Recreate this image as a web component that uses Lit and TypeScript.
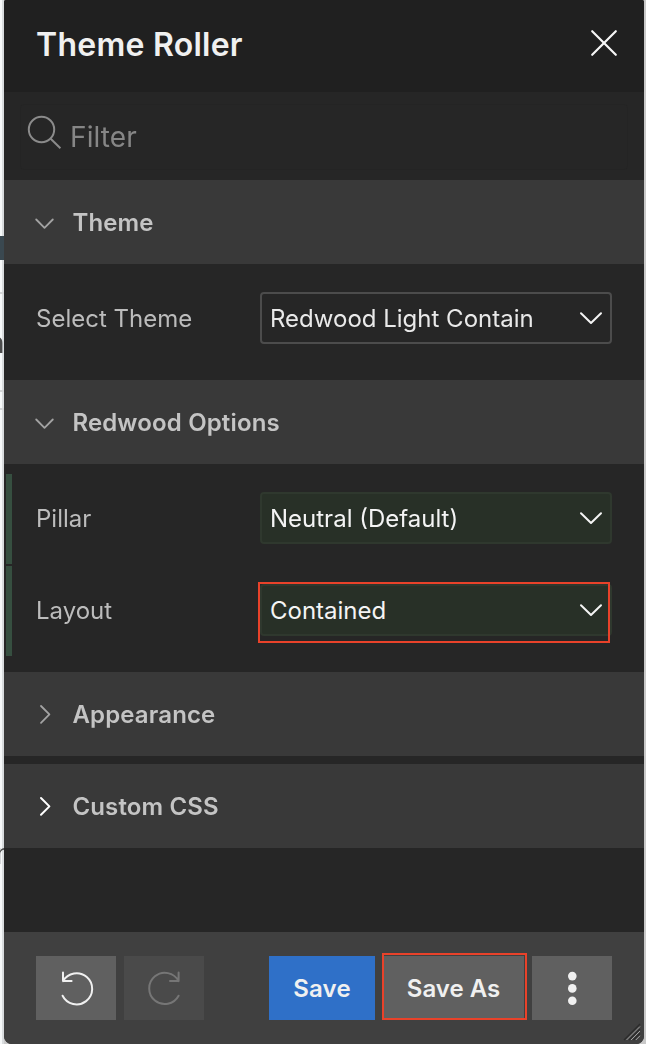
import { LitElement, html, css, svg } from "lit";
import { customElement, property } from "lit/decorators.js";
import { classMap } from "lit/directives/class-map.js";

@customElement("tr-group-header")
class GroupHeader extends LitElement {
  @property() label = "";
  @property({ type: Boolean }) open = false;
  @property({ type: Boolean }) bright = false;
  static styles = css`
    :host { display: flex; align-items: center; height: 84px; background: #393939; }
    svg { width: 24px; height: 24px; margin: 0 16px 0 28px; fill: none; stroke: #a3a3a3; stroke-width: 1.8; stroke-linecap: round; stroke-linejoin: round; }
    svg.bright { stroke: #fff; stroke-width: 2; }
    span { font-size: 24px; font-weight: 600; line-height: 32px; color: #c4c4c4; letter-spacing: 0.15px; padding: 2px 0 0 0.4px; }
  `;
  render() {
    return html`<svg class=${classMap({ bright: this.bright })} viewBox="0 0 24 24">
        ${this.open ? svg`<path d="M4.2 9.5 12.5 17.8 20.8 9.5" />` : svg`<path d="M9 4 17.4 12.4 9 20.8" />`}
      </svg><span>${this.label}</span>`;
  }
}

@customElement("tr-select")
class Select extends LitElement {
  @property() value = "";
  @property({ type: Boolean, reflect: true }) changed = false;
  static styles = css`
    :host { display: flex; align-items: center; justify-content: space-between; box-sizing: border-box; width: 352px; height: 52px; border: 2px solid #4c4c4c; border-radius: 4px; background: #262626; color: #e9e9e9; padding: 0 7px 0 8px; }
    :host([changed]) { background: #283027; border-color: #2f382e; color: #f4f4f4; }
    span { font-size: 24px; line-height: 32px; padding-top: 2px; }
    svg { width: 24px; height: 24px; fill: none; stroke: #f4f4f4; stroke-width: 2; stroke-linecap: round; stroke-linejoin: round; }
  `;
  render() {
    return html`<span>${this.value}</span><svg viewBox="0 0 24 24"><path d="M2 7.2 12 17 22 7.2" /></svg>`;
  }
}

@customElement("app-root")
class AppRoot extends LitElement {
  static styles = css`
    :host { display: block; position: relative; width: 646px; height: 1044px; overflow: hidden; background: #f9fafb; font-family: Inter, "Liberation Sans", sans-serif; }
    .page { position: absolute; inset: 0; background: linear-gradient(90deg, #f6f8f9 2px, #d9dcde 2px, #d9dcde 4px, #c9c9c9 4px); }
    .band { position: absolute; left: 0; top: 236px; width: 4px; height: 24px; background: #3a4850; }
    .rule { position: absolute; left: 0; width: 4px; height: 2px; background: #d3d5d6; }
    .r1 { top: 292px; } .r2 { top: 390px; } .r3 { top: 408px; }
    .glyph { position: absolute; left: -12px; font-size: 28px; line-height: 36px; color: #4b4b4b; will-change: transform; }
    .g1 { top: 325px; } .g2 { top: 836px; left: -4px; font-weight: 300; }
    .panel { position: relative; display: flex; flex-direction: column; width: 640px; height: 1044px; margin-left: 4px; background: #262626; border-radius: 2px 2px 8px 8px; overflow: hidden; }
    .title { display: flex; align-items: center; justify-content: space-between; height: 92px; box-sizing: border-box; padding: 0 26px 4px 32px; background: #202020; }
    h1 { margin: 0; font-size: 32px; font-weight: 600; line-height: 40px; color: #f0f0f0; letter-spacing: 0.25px; padding-top: 2px; }
    .close { width: 28px; height: 28px; margin-top: -2px; stroke: #f6f6f6; stroke-width: 2.2; stroke-linecap: round; fill: none; }
    .filter { display: flex; height: 66px; margin: 12px 16px 10px; box-sizing: border-box; border: 1px solid #242424; border-radius: 4px; }
    .filter svg { width: 36px; height: 36px; margin: 9px 5px 0 6px; fill: none; stroke: #8b8b8b; stroke-width: 2; }
    .filter span { font-size: 28px; line-height: 36px; color: #868686; padding: 14px 0 0 2px; letter-spacing: 0.1px; }
    .body { padding: 10px 0 16px 2px; display: flex; flex-direction: column; gap: 2px; }
    .row { display: flex; align-items: flex-start; justify-content: space-between; height: 90px; box-sizing: border-box; padding: 18px 32px 0 24px; border-left: 6px solid transparent; }
    .row.changed { border-color: #364f40; }
    .label { font-size: 24px; line-height: 52px; color: #bcbcbc; padding-top: 1px; }
    .field { position: relative; }
    .mark { position: absolute; border: 2px solid #e9422a; box-sizing: border-box; }
    .field .mark { left: -2px; top: -2px; width: 352px; height: 61px; }
    .gap { height: 8px; }
    .space { flex: 1; }
    .footer { display: flex; gap: 8px; height: 112px; box-sizing: border-box; padding: 24px 32px; background: #404040; }
    .btn { position: relative; display: flex; align-items: center; justify-content: center; box-sizing: border-box; width: 80px; height: 64px; background: #606060; color: #f0f0f0; font-size: 24px; font-weight: 600; }
    .btn svg { width: 40px; height: 40px; fill: none; stroke: #f0f0f0; stroke-width: 2; stroke-linecap: round; stroke-linejoin: round; }
    .off { background: #4a4a4a; }
    .off svg { stroke: #767676; }
    .btn .dots { fill: #f0f0f0; stroke: none; }
    .save, .as { padding-top: 1px; }
    .save { width: 106px; background: #2f70c8; margin-left: auto; letter-spacing: 0.2px; }
    .as { width: 141px; }
    .as .mark { left: -1px; top: -3px; width: 145px; height: 67px; }
    .grip { position: absolute; right: 3px; bottom: 3px; width: 18px; height: 18px; fill: none; }
  `;
  render() {
    return html`
      <div class="page">
        <div class="band"></div>
        <div class="rule r1"></div><div class="rule r2"></div><div class="rule r3"></div>
        <div class="glyph g1">n</div><div class="glyph g2">r</div>
      </div>
      <div class="panel">
        <div class="title"><h1>Theme Roller</h1>
          <svg class="close" viewBox="0 0 28 28"><path d="M2.2 2.2 25.8 25.8M25.8 2.2 2.2 25.8" /></svg>
        </div>
        <div class="filter">
          <svg viewBox="0 0 36 36"><circle cx="14.5" cy="15.5" r="12.7" /><path d="M23.7 24.7 33.4 34.2" /></svg>
          <span>Filter</span>
        </div>
        <tr-group-header label="Theme" open></tr-group-header>
        <div class="body"><div class="row"><span class="label">Select Theme</span>
          <tr-select value="Redwood Light Contain"></tr-select></div></div>
        <tr-group-header label="Redwood Options" open></tr-group-header>
        <div class="body">
          <div class="row changed"><span class="label">Pillar</span><tr-select changed value="Neutral (Default)"></tr-select></div>
          <div class="row changed"><span class="label">Layout</span>
            <div class="field"><tr-select changed value="Contained"></tr-select><div class="mark"></div></div></div>
        </div>
        <tr-group-header label="Appearance"></tr-group-header>
        <div class="gap"></div>
        <tr-group-header label="Custom CSS" bright></tr-group-header>
        <div class="space"></div>
        <div class="footer">
          <div class="btn"><svg viewBox="0 0 40 40"><path d="M7 4.5V13.1H15.6M7 13.1A15.6 15.6 0 1 1 6.6 27.7" /></svg></div>
          <div class="btn off"><svg viewBox="0 0 40 40"><path d="M34.6 4.5V13.1H26M34.6 13.1A15.6 15.6 0 1 0 34.6 27.7" /></svg></div>
          <div class="btn save">Save</div>
          <div class="btn as">Save As<div class="mark"></div></div>
          <div class="btn"><svg class="dots" viewBox="0 0 40 40"><circle cx="20.3" cy="8.1" r="4.3" /><circle cx="20.3" cy="20.4" r="4.3" /><circle cx="20.3" cy="32.7" r="4.3" /></svg></div>
        </div>
        <svg class="grip" viewBox="0 0 18 18">
          <path stroke="#2b2b2b" stroke-width="1.3" d="M1 17 17 1M6 17 17 6M10.5 17 17 10.5" />
          <path stroke="#a0a0a0" stroke-width="1" d="M3.5 17 17 3.5M8 17 17 8M12.8 17 17 12.8" />
        </svg>
      </div>`;
  }
}
